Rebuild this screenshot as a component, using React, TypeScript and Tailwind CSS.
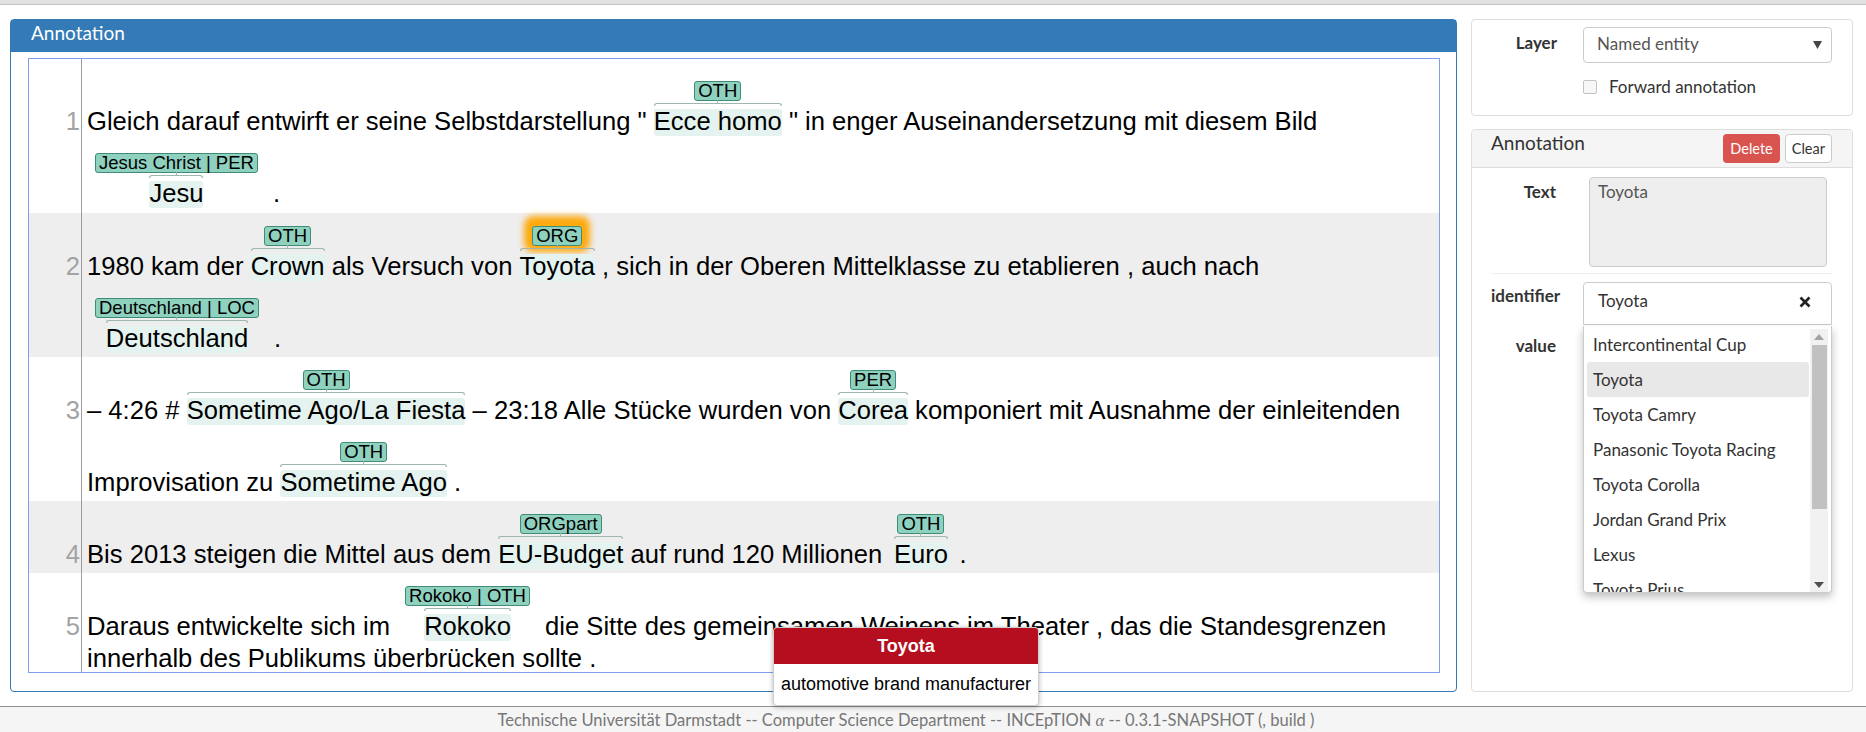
import React from "react";

type Chunk = { w: string; l: string; focus?: boolean };
type Seg = string | Chunk;

const rows: { n: number; grey: boolean; first?: boolean; lines: Seg[][] }[] = [
  {
    n: 1,
    grey: false,
    first: true,
    lines: [
      [
        "Gleich darauf entwirft er seine Selbstdarstellung \" ",
        { w: "Ecce homo", l: "OTH" },
        " \" in enger Auseinandersetzung mit diesem Bild",
      ],
      [{ w: "Jesu", l: "Jesus Christ | PER" }, " ."],
    ],
  },
  {
    n: 2,
    grey: true,
    lines: [
      [
        "1980 kam der ",
        { w: "Crown", l: "OTH" },
        " als Versuch von ",
        { w: "Toyota", l: "ORG", focus: true },
        " , sich in der Oberen Mittelklasse zu etablieren , auch nach",
      ],
      [{ w: "Deutschland", l: "Deutschland | LOC" }, " ."],
    ],
  },
  {
    n: 3,
    grey: false,
    lines: [
      [
        "– 4:26 # ",
        { w: "Sometime Ago/La Fiesta", l: "OTH" },
        " – 23:18 Alle Stücke wurden von ",
        { w: "Corea", l: "PER" },
        " komponiert mit Ausnahme der einleitenden",
      ],
      ["Improvisation zu ", { w: "Sometime Ago", l: "OTH" }, " ."],
    ],
  },
  {
    n: 4,
    grey: true,
    lines: [
      [
        "Bis 2013 steigen die Mittel aus dem ",
        { w: "EU-Budget", l: "ORGpart" },
        " auf rund 120 Millionen ",
        { w: "Euro", l: "OTH" },
        " .",
      ],
    ],
  },
  {
    n: 5,
    grey: false,
    lines: [
      [
        "Daraus entwickelte sich im ",
        { w: "Rokoko", l: "Rokoko | OTH" },
        " die Sitte des gemeinsamen Weinens im Theater , das die Standesgrenzen",
      ],
      ["innerhalb des Publikums überbrücken sollte ."],
    ],
  },
];

const options = [
  "Intercontinental Cup",
  "Toyota",
  "Toyota Camry",
  "Panasonic Toyota Racing",
  "Toyota Corolla",
  "Jordan Grand Prix",
  "Lexus",
  "Toyota Prius",
];

function Brace() {
  return (
    <span className="flex h-[5px]">
      <span className="mt-[2px] flex-1 rounded-tl-[6px] border-l border-t border-[#9fb6ae]" />
      <span className="-mt-[1px] h-[4px] w-px bg-[#9fb6ae]" />
      <span className="mt-[2px] flex-1 rounded-tr-[6px] border-r border-t border-[#9fb6ae]" />
    </span>
  );
}

function Span({ c }: { c: Chunk }) {
  return (
    <span className="flex flex-col items-center">
      <span
        className={`mx-[8px] h-[20px] rounded-[3px] border border-[#3f8b77] bg-[#8fd1bf] px-[3px] text-[18.5px] leading-[18px] text-black ${
          c.focus ? "shadow-[0_-2px_6px_8px_rgba(255,165,0,0.95)]" : ""
        }`}
      >
        {c.l}
      </span>
      <span className="flex flex-col">
        <Brace />
        <span className="relative leading-[30px]">
          <span className="absolute inset-x-0 bottom-0 top-[3px] rounded-[3px] bg-[#e4f3ef]" />
          <span className="relative">{c.w}</span>
        </span>
      </span>
    </span>
  );
}

function Row({ row }: { row: (typeof rows)[number] }) {
  const last = row.n === 5;
  return (
    <div className={`flex ${row.grey ? "bg-[#eeeeee]" : "bg-white"}`}>
      <div
        className={`w-[53px] shrink-0 border-r border-[#9c9c9c] pr-[1px] text-right leading-[30px] text-[#a3a3a3] ${
          row.first ? "pt-[47px]" : "pt-[38px]"
        }`}
      >
        {row.n}
      </div>
      <div
        className={`flex flex-col pl-[5px] ${row.first ? "pt-[22px] pb-[5px]" : "pt-[13px]"} ${
          last ? "pb-0" : row.first ? "" : "pb-[4px]"
        }`}
      >
        {row.lines.map((line, i) => {
          const labelled = line.some((s) => typeof s !== "string");
          return (
            <div
              key={i}
              className={`flex items-end whitespace-pre ${
                i === 0 ? "" : labelled ? "mt-[17px]" : "mt-[2px]"
              }`}
            >
              {line.map((s, j) =>
                typeof s === "string" ? (
                  <span key={j} className="leading-[30px]">
                    {s}
                  </span>
                ) : (
                  <Span key={j} c={s} />
                )
              )}
            </div>
          );
        })}
      </div>
    </div>
  );
}

export default function App() {
  return (
    <div className="relative flex h-[732px] w-[1866px] flex-col overflow-hidden bg-white font-['Lato',sans-serif] text-[17px] text-[#333]">
      <div className="h-[5px] shrink-0 border-b border-[#c4c4c4] bg-[#e1e1e1]" />

      <div className="flex gap-[14px] pl-[10px] pr-[13px] pt-[14px]">
        {/* annotation editor */}
        <section className="flex h-[673px] flex-1 flex-col rounded-[4px] border border-[#337ab7]">
          <div className="h-[32px] shrink-0 bg-[#337ab7] pl-[20px] pt-[1px] text-[19px] leading-[24px] text-white">
            Annotation
          </div>
          <div className="flex min-h-0 flex-1 flex-col pb-[18px] pl-[17px] pr-[16px] pt-[6px]">
            <div className="flex-1 overflow-hidden border border-[#7e9ff0] font-['Liberation_Sans',Arial,sans-serif] text-[25.6px] text-black">
              {rows.map((r) => (
                <Row key={r.n} row={r} />
              ))}
            </div>
          </div>
        </section>

        {/* sidebar */}
        <aside className="flex w-[382px] shrink-0 flex-col gap-[13px]">
          <div className="h-[97px] rounded-[4px] border border-[#dddddd] pt-[7px]">
            <div className="flex">
              <div className="w-[85px] pt-[4px] text-right font-bold leading-[24px]">Layer</div>
              <div className="ml-[26px] flex h-[36px] w-[249px] items-start justify-between rounded-[4px] border border-[#cccccc] pl-[13px] pr-[9px] pt-[4px] leading-[24px] text-[#555]">
                <span>Named entity</span>
                <svg width="9" height="8" viewBox="0 0 9 8" className="mt-[9px]">
                  <polygon points="0,0 9,0 4.5,8" fill="#444" />
                </svg>
              </div>
            </div>
            <div className="ml-[111px] mt-[12px] flex items-center gap-[12px] leading-[24px]">
              <span className="h-[14px] w-[14px] rounded-[2px] border border-[#c4c4c4] bg-[#f7f7f7]" />
              <span className="text-[#333]">Forward annotation</span>
            </div>
          </div>

          <div className="relative flex flex-1 flex-col rounded-[4px] border border-[#dddddd]">
            <div className="flex h-[38px] shrink-0 items-start justify-between rounded-t-[4px] border-b border-[#dddddd] bg-[#f5f5f5] pl-[19px] pr-[20px]">
              <span className="pt-[1px] text-[19px] leading-[24px]">Annotation</span>
              <div className="flex gap-[5px] pt-[4px]">
                <span className="h-[29px] rounded-[4px] bg-[#d9534f] px-[7px] text-[14.5px] leading-[29px] text-white">
                  Delete
                </span>
                <span className="h-[29px] rounded-[4px] border border-[#cccccc] bg-white px-[6px] text-[14.5px] leading-[27px] text-[#333]">
                  Clear
                </span>
              </div>
            </div>

            <div className="flex flex-col pl-[19px] pr-[20px] pt-[9px]">
              <div className="flex">
                <div className="w-[65px] pt-[3px] text-right font-bold leading-[24px]">Text</div>
                <div className="ml-[33px] h-[90px] w-[238px] rounded-[4px] border border-[#cccccc] bg-[#eeeeee] pl-[8px] pt-[2px] leading-[24px] text-[#555]">
                  Toyota
                </div>
              </div>
              <div className="mt-[6px] border-t border-[#eeeeee]" />
              <div className="mt-[8px] flex">
                <div className="w-[65px] whitespace-nowrap pt-[2px] text-right font-bold leading-[24px]">
                  identifier
                </div>
                <div className="ml-[27px] flex h-[43px] w-[249px] items-start justify-between rounded-t-[4px] border border-[#cccccc] pl-[14px] pr-[20px] pt-[6px] leading-[24px]">
                  <span>Toyota</span>
                  <svg width="12" height="12" viewBox="0 0 12 12" className="mt-[7px]">
                    <path d="M1.5 1.5 L10.5 10.5 M10.5 1.5 L1.5 10.5" stroke="#222" strokeWidth="2.6" />
                  </svg>
                </div>
              </div>
              <div className="mt-[9px] flex">
                <div className="w-[65px] text-right font-bold leading-[24px]">value</div>
              </div>
            </div>

            {/* autocomplete popup */}
            <div className="absolute left-[111px] top-[196px] flex h-[267px] w-[249px] overflow-hidden rounded-b-[4px] border border-t-0 border-[#cccccc] bg-white pl-[3px] pt-[1px] shadow-[0_4px_8px_rgba(0,0,0,0.25)]">
              <ul className="flex-1">
                {options.map((o) => (
                  <li
                    key={o}
                    className={`h-[35px] rounded-[3px] px-[6px] leading-[35px] ${
                      o === "Toyota" ? "bg-[#e8e8e8]" : ""
                    }`}
                  >
                    {o}
                  </li>
                ))}
              </ul>
              <div className="ml-[1px] mr-[3px] mt-[2px] flex w-[18px] flex-col items-center bg-[#f1f1f1] pb-[4px]">
                <svg width="10" height="6" viewBox="0 0 10 6" className="mt-[5px]">
                  <polygon points="5,0 10,6 0,6" fill="#a3a3a3" />
                </svg>
                <div className="mt-[5px] h-[164px] w-[15px] bg-[#c1c1c1]" />
                <div className="flex-1" />
                <svg width="10" height="6" viewBox="0 0 10 6">
                  <polygon points="0,0 10,0 5,6" fill="#505050" />
                </svg>
              </div>
            </div>
          </div>
        </aside>
      </div>

      <footer className="mt-[14px] flex flex-1 justify-center border-t border-[#8f8f8f] bg-[#f5f5f5] pr-[54px] pt-[1px] text-[16.5px] leading-[24px] text-[#777]">
        <span>
          Technische Universität Darmstadt -- Computer Science Department -- INCEpTION{" "}
          <i className="font-['Liberation_Serif',serif]">α</i> -- 0.3.1-SNAPSHOT (, build )
        </span>
      </footer>

      {/* hover popup over the focused span */}
      <div className="absolute left-[773px] top-[627px] w-[266px] overflow-hidden rounded-[4px] border border-[#cfcfcf] bg-white font-['Liberation_Sans',Arial,sans-serif] text-[18px] text-black shadow-[0_1px_5px_rgba(0,0,0,0.3)]">
        <div className="h-[36px] bg-[#b50f1f] text-center font-bold leading-[36px] text-white">Toyota</div>
        <div className="h-[41px] text-center leading-[41px]">automotive brand manufacturer</div>
      </div>
    </div>
  );
}
